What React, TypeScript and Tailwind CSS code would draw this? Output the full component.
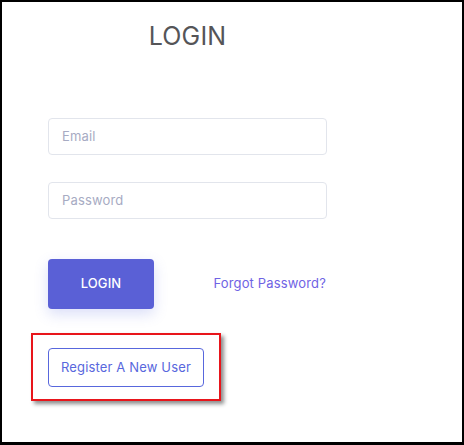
import React from "react";

export default function App() {
  return (
    <div
      className="w-[464px] h-[445px] bg-white border-black border-t-2 border-l-2 border-r-2 border-b-[3px] box-border overflow-hidden"
      style={{ fontFamily: "Inter, 'Open Sans', sans-serif" }}
    >
      <div className="ml-[46px] w-[279px] flex flex-col">
        <h1 className="mt-[19px] text-center text-[25px] leading-[30px] font-normal tracking-[0.2px] text-[#555558]">
          LOGIN
        </h1>
        <div className="mt-[67px] h-[37px] rounded-[4px] border border-[#e2e5ec] flex items-center pl-[13px] text-[13px] tracking-[0.15px] text-[#a7abc3]">
          Email
        </div>
        <div className="mt-[27px] h-[37px] rounded-[4px] border border-[#e2e5ec] flex items-center pl-[13px] text-[13px] tracking-[0.15px] text-[#a7abc3]">
          Password
        </div>
        <div className="mt-[40px] flex items-center justify-between">
          <button className="w-[106px] h-[50px] rounded-[4px] bg-[#5a60d6] text-white text-[13px] font-medium tracking-[0.1px] shadow-[0_5px_14px_rgba(88,103,221,0.22)]">
            LOGIN
          </button>
          <span className="text-[13px] tracking-[0.15px] text-[#6f63e4] mr-[1px]">Forgot Password?</span>
        </div>
        <div className="mt-[24px] -ml-[17px] w-[190px] h-[68px] border-2 border-[#e8151b] shadow-[3px_3px_4px_rgba(0,0,0,0.45)] pt-[13px] pl-[15px]">
          <button className="w-[156px] h-[39px] rounded-[4px] border border-[#5867dd] text-[#5867dd] text-[13px] tracking-[0.15px] flex items-center justify-center">
            Register A New User
          </button>
        </div>
      </div>
    </div>
  );
}
